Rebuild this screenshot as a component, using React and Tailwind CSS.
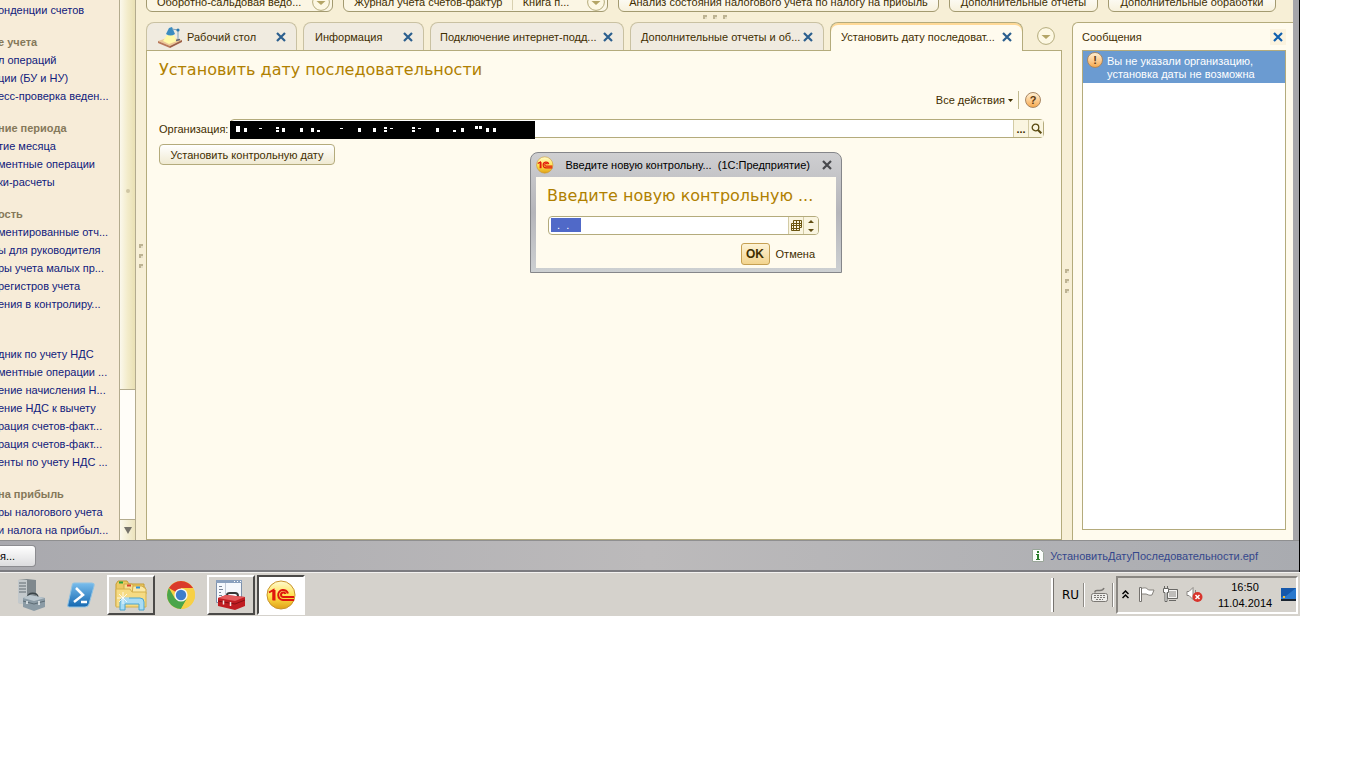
import React from "react";

const menuGroups = [
  { links: ["онденции счетов"] },
  {
    title: "е учета",
    links: ["л операций", "ции (БУ и НУ)", "есс-проверка веден..."]
  },
  {
    title: "ние периода",
    links: ["тие месяца", "ментные операции", "ки-расчеты"]
  },
  {
    title: "ость",
    links: [
      "ментированные отч...",
      "ы для руководителя",
      "ры учета малых пр...",
      "регистров учета",
      "ения в контролиру..."
    ]
  },
  {
    title: "\u00a0",
    links: [
      "дник по учету НДС",
      "ментные операции ...",
      "ение начисления Н...",
      "ение НДС к вычету",
      "рация счетов-факт...",
      "рация счетов-факт...",
      "енты по учету НДС ..."
    ]
  },
  {
    title: "на прибыль",
    links: ["ры налогового учета", "и налога на прибыл..."]
  }
];

const Cross = ({ color = "#2b5f8e" }) => (
  <svg width="10" height="10" viewBox="0 0 10 10" aria-hidden="true">
    <path d="M1 1l8 8M9 1L1 9" stroke={color} strokeWidth="2.2" fill="none" />
  </svg>
);

const CircleArrow = () => (
  <svg width="18" height="18" viewBox="0 0 18 18" aria-hidden="true">
    <circle cx="9" cy="9" r="8.4" fill="#fdf8e3" stroke="#b4ab7c" />
    <path d="M4.5 8h9L9 12z" fill="#b4a566" />
  </svg>
);

const Dots = ({ vertical }) => (
  <div className={vertical ? "flex flex-col gap-1.5" : "flex gap-1.5"}>
    {[0, 1, 2].map(i => (
      <span
        key={i}
        className="block h-1 w-1 border-l-2 border-t-2 border-[#bdb392] bg-[#e6dfc6]"
      />
    ))}
  </div>
);

const LampIcon = () => (
  <svg width="26" height="22" viewBox="0 0 26 22" aria-hidden="true">
    <path d="M1 15l12-4 12 3-12 6z" fill="#edc795" />
    <path d="M1 15l12 5v2L1 17z" fill="#b9785a" />
    <path d="M13 20l12-6v2l-12 6z" fill="#9c6047" />
    <path d="M10 9h7l3 6-8 3-6-3z" fill="#fff9a8" />
    <path d="M12 2l3-1 3 7c-3 2-6 2-9 0z" fill="#3b8cc0" />
    <path d="M15 3l6 1v10" stroke="#7fa3bd" fill="none" />
    <circle cx="21" cy="4" r="1.6" fill="#2c79ae" />
    <path d="M19 14.500l4-1" stroke="#667" strokeWidth="1.500" />
  </svg>
);

const BadgeIcon = ({ sign }) => (
  <span className="flex h-4 w-4 shrink-0 items-center justify-center rounded-full border border-[#a98763] bg-linear-to-b from-[#fff0d2] to-[#f7aa4c] text-[11px] leading-3 font-bold text-[#5b3a12]">
    {sign}
  </span>
);

const OneCLogo = ({ size }) => (
  <svg width={size} height={size} viewBox="0 0 30 30" aria-hidden="true">
    <defs>
      <linearGradient id="gold" x1="0" y1="0" x2="0" y2="1">
        <stop offset="0" stopColor="#fffbd0" />
        <stop offset=".55" stopColor="#ffe14a" />
        <stop offset="1" stopColor="#e0a016" />
      </linearGradient>
    </defs>
    <circle cx="15" cy="15" r="14" fill="url(#gold)" stroke="#c8942e" />
    <path
      d="M3 12.500L7.500 10v10M22 13.500a5 5 0 1 0-5 6.500h11M19.500 14a2.300 2.300 0 1 0-2.500 3h11"
      fill="none"
      stroke="#e0170c"
      strokeWidth="2"
    />
    <path d="M6.500 10h3v10.500h-3z" fill="#e0170c" />
  </svg>
);

const ToolButton = ({ text, className }) => (
  <button
    className={`flex h-5 shrink-0 items-center justify-center rounded-md border border-[#a39a70] bg-linear-to-b from-white to-[#f7f1dc] whitespace-nowrap ${className}`}
  >
    {text}
  </button>
);

const Toolbar = () => (
  <div className="flex h-3 items-end gap-2.5">
    <div className="flex h-5 w-[187px] shrink-0 items-center justify-between rounded-md border border-[#a39a70] bg-[#fbf6e4] pr-0.5 pl-2.5">
      <button className="whitespace-nowrap">Оборотно-сальдовая ведо...</button>
      <button aria-label="Еще отчеты">
        <CircleArrow />
      </button>
    </div>
    <div className="flex h-5 w-[265px] shrink-0 items-center justify-between rounded-md border border-[#a39a70] bg-[#fbf6e4] pr-0.5 pl-2.5">
      <button className="whitespace-nowrap">Журнал учета счетов-фактур</button>
      <span className="h-4 w-px bg-[#d8d0b0]" />
      <button className="mr-2 whitespace-nowrap">Книга п...</button>
      <button aria-label="Еще журналы">
        <CircleArrow />
      </button>
    </div>
    <ToolButton
      text="Анализ состояния налогового учета по налогу на прибыль"
      className="w-[321px]"
    />
    <ToolButton text="Дополнительные отчеты" className="w-[149px]" />
    <ToolButton text="Дополнительные обработки" className="w-[168px]" />
  </div>
);

const Sidebar = () => (
  <nav className="w-[119px] shrink-0 overflow-hidden bg-[#f7ecd8]">
    <div className="-ml-0.5 flex flex-col gap-3.5 py-px">
      {menuGroups.map((group, i) => (
        <div key={i} className="flex flex-col">
          {group.title && (
            <h2 className="h-[18px] leading-[18px] font-bold whitespace-nowrap text-[#85785a]">
              {group.title}
            </h2>
          )}
          {group.links.map((link, j) => (
            <a
              key={j}
              href="#"
              className="h-[18px] leading-[18px] whitespace-nowrap text-[#10207c]"
            >
              {link}
            </a>
          ))}
        </div>
      ))}
    </div>
  </nav>
);

const SidebarScroll = () => (
  <div className="flex w-[17px] shrink-0 flex-col border-x border-[#b3ab8e] bg-[#fffdf8]">
    <div className="flex h-[390px] items-center justify-center border-b border-[#b3ab8e] bg-linear-to-r from-[#fbf8ec] via-[#f3eccb] to-[#e9e0b4] pb-2">
      <span className="block h-1 w-1 rounded-full bg-[#cfc6a4]" />
    </div>
    <button
      aria-label="Прокрутить вниз"
      className="mt-auto flex h-[21px] items-center justify-center border-t border-[#b3ab8e] bg-linear-to-r from-[#fbf8ec] to-[#ece4bd]"
    >
      <svg width="8" height="7" viewBox="0 0 8 7" aria-hidden="true">
        <path d="M0 0h8L4 7z" fill="#75726a" />
      </svg>
    </button>
  </div>
);

const Tab = ({ text, className, icon, active }) => (
  <div
    className={`flex shrink-0 items-center justify-between rounded-t-lg border border-b-0 pr-2.5 ${
      active
        ? "h-[29px] border-[#b4ab7c] bg-[#fffbee] shadow-[inset_0_2px_0_#ffd996]"
        : "h-7 border-[#c9c1a2] bg-[#f0ebe0]"
    } ${className}`}
  >
    <button className="flex items-center gap-1 whitespace-nowrap">
      {icon}
      {text}
    </button>
    <button aria-label={`Закрыть: ${text}`}>
      <Cross />
    </button>
  </div>
);

const Tabs = () => (
  <div className="relative z-10 -mb-px flex h-[29px] items-start gap-1.5">
    <Tab text="Рабочий стол" icon={<LampIcon />} className="w-[151px] pl-2.5" />
    <Tab text="Информация" className="w-[121px] pl-[11px]" />
    <Tab text="Подключение интернет-подд..." className="w-[194px] pl-[9px]" />
    <Tab text="Дополнительные отчеты и об..." className="w-[194px] pl-2.5" />
    <Tab
      text="Установить дату последоват..."
      className="w-[193px] pl-2.5"
      active
    />
    <button aria-label="Список окон" className="mt-[5px] ml-2">
      <CircleArrow />
    </button>
  </div>
);

// bits of the organization name that stay visible on the black strip
const specks = [
  [6, 5, 4, 6], [14, 7, 3, 4], [29, 7, 3, 1], [46, 6, 3, 2], [46, 9, 3, 2],
  [52, 7, 3, 4], [70, 7, 3, 4], [81, 7, 3, 4], [87, 9, 3, 2], [110, 7, 3, 1],
  [128, 7, 3, 4], [143, 7, 3, 4], [154, 6, 3, 2], [154, 9, 3, 2],
  [160, 7, 3, 1], [182, 6, 3, 2], [182, 9, 3, 2], [188, 7, 3, 1],
  [206, 7, 3, 4], [223, 9, 3, 2], [231, 7, 3, 4], [245, 5, 3, 3],
  [249, 5, 3, 3], [256, 7, 3, 4], [263, 7, 3, 4]
];

const Specks = () => (
  <svg
    className="absolute top-px -left-px bg-black"
    width="305"
    height="18"
    viewBox="0 0 305 18"
    shapeRendering="crispEdges"
    aria-hidden="true"
  >
    {specks.map(([x, y, w, h], i) => (
      <rect key={i} x={x} y={y} width={w} height={h} fill="#fff" />
    ))}
  </svg>
);

const Form = () => (
  <main className="flex flex-1 flex-col border border-[#b4ab7c] bg-[#fffbee] pr-[17px] pl-3">
    <h1 className="mt-[7px] font-['DejaVu_Sans'] text-[16px] leading-6 text-[#b08000]">
      Установить дату последовательности
    </h1>
    <div className="mt-2 flex h-5 items-center justify-end">
      <button className="flex items-center gap-[3px]">
        Все действия
        <svg width="5" height="3" viewBox="0 0 5 3" aria-hidden="true">
          <path d="M0 0h5L2.500 3z" fill="#3f2e00" />
        </svg>
      </button>
      <span className="mr-1.5 ml-[5px] h-[18px] w-px bg-[#c2ba90]" />
      <button aria-label="Справка" className="mr-[3px]">
        <BadgeIcon sign="?" />
      </button>
    </div>
    <div className="mt-[9px] flex items-center">
      <label htmlFor="org" className="w-[71px] whitespace-nowrap">
        Организация:
      </label>
      <div className="relative flex h-[19px] flex-1 rounded-sm border border-[#b4ab7c] bg-white">
        <input id="org" className="min-w-0 flex-1 px-1 outline-none" />
        <Specks />
        <button className="w-[15px] border-l border-[#d3cba5] bg-[#faf5e0] font-bold">
          ...
        </button>
        <button
          aria-label="Открыть"
          className="flex w-[15px] items-center justify-center border-l border-[#d3cba5] bg-[#faf5e0]"
        >
          <svg width="11" height="11" viewBox="0 0 11 11" aria-hidden="true">
            <circle cx="4.500" cy="4.500" r="3.300" fill="none" stroke="#5a4a10" strokeWidth="1.300" />
            <path d="M7 7l3.300 3.300" stroke="#5a4a10" strokeWidth="2" />
          </svg>
        </button>
      </div>
    </div>
    <button className="mt-1.5 h-[21px] w-44 rounded-sm border border-[#b4ab7c] bg-linear-to-b from-white to-[#f0ead2] whitespace-nowrap">
      Установить контрольную дату
    </button>
  </main>
);

const Messages = () => (
  <aside className="flex w-[221px] shrink-0 flex-col rounded-tl-md border-t border-l border-[#b4ab7c] bg-[#fffbee] pr-[7px] pb-2.5 pl-[9px]">
    <div className="flex h-[27px] items-center justify-between">
      <h2>Сообщения</h2>
      <button
        aria-label="Закрыть сообщения"
        className="flex h-4 w-4 items-center justify-center bg-[#fbf3df]"
      >
        <Cross color="#0f5fae" />
      </button>
    </div>
    <div className="flex-1 border border-[#b4ab7c] bg-white">
      <div className="flex gap-1 bg-[#6b9bd1] px-1 pt-1 pb-0.5 leading-[13px] whitespace-nowrap text-white">
        <div className="-mt-[3px]">
          <BadgeIcon sign="!" />
        </div>
        <p>
          Вы не указали организацию,
          <br />
          установка даты не возможна
        </p>
      </div>
    </div>
  </aside>
);

const DateDialog = () => (
  <div
    role="dialog"
    aria-labelledby="dialog-title"
    className="absolute top-[152px] left-[530px] z-20 w-[312px] rounded-t-lg border border-[#85868a] bg-linear-to-b from-[#cfcfd1] via-[#b5b5ba] to-[#cdd0d2] px-[5px] pb-1"
  >
    <div className="flex h-6 items-center gap-3 text-black">
      <OneCLogo size={18} />
      <span className="flex-1 whitespace-pre">
        {"Введите новую контрольну...  (1С:Предприятие)"}
      </span>
      <button aria-label="Закрыть окно" className="mr-1">
        <Cross color="#47484c" />
      </button>
    </div>
    <div className="bg-[#fffbee] pt-[7px] pr-[17px] pb-[3px] pl-3">
      <h2
        id="dialog-title"
        className="-ml-px font-['DejaVu_Sans'] text-[16px] leading-6 whitespace-nowrap text-[#b08000]"
      >
        Введите новую контрольную ...
      </h2>
      <div className="mt-2 flex h-[19px] overflow-hidden rounded-sm border border-[#b4ab7c] bg-white p-px pr-0">
        <input
          aria-label="Контрольная дата"
          defaultValue="  .  ."
          className="ml-px h-[14px] w-[30px] bg-[#5069c8] text-white outline-none"
        />
        <button
          aria-label="Выбрать дату"
          className="-my-px ml-auto flex w-[15px] items-center justify-center border-l border-[#d3cba5] bg-[#faf5e0]"
        >
          <svg width="11" height="11" viewBox="0 0 11 11" aria-hidden="true">
            <path
              d="M2.5 .5h8v7h-2v3h-8v-7h2zM2.5 3.5v7M5.5 .5v10M8.5 .5v10M.5 5.5h10M.5 8.5h8M2.5 3.5h8"
              fill="none"
              stroke="#6b5510"
            />
          </svg>
        </button>
        <button
          aria-label="Изменить дату"
          className="-my-px flex w-[15px] items-center justify-center border-l border-[#d3cba5] bg-[#faf5e0]"
        >
          <svg width="6" height="12" viewBox="0 0 6 12" aria-hidden="true">
            <path d="M0 3h6L3 0zM0 9h6L3 12z" fill="#5f4c12" />
          </svg>
        </button>
      </div>
      <div className="mt-2 flex h-[22px] items-center justify-end gap-1.5">
        <button className="h-[22px] w-[29px] rounded-[3px] border border-[#c6a052] bg-linear-to-b from-[#fdf3d6] to-[#f3d48e] text-[12px] font-bold">
          OK
        </button>
        <button className="pr-1">Отмена</button>
      </div>
    </div>
  </div>
);

const StatusBar = () => (
  <div className="flex h-8 items-center justify-between border-t border-b-2 border-t-[#8f8f90] border-b-[#7c7c80] bg-linear-to-r from-[#a9a9ae] via-[#bcbabb] to-[#a9abb0] pr-[41px]">
    <button className="h-[22px] w-9 rounded-r border border-l-0 border-[#8c8c90] bg-linear-to-b from-white to-[#dcdcde] text-left text-black">
      я...
    </button>
    <a href="#" className="flex items-center gap-1.5 text-[#34478c]">
      <svg width="12" height="13" viewBox="0 0 12 13" aria-hidden="true">
        <path d="M.5 .5h8l3 3v9h-11z" fill="#fbfdfb" stroke="#9aa69a" />
        <path d="M5 2h2v2H5zM4 5h3v5h1v1H4v-1h1V6H4z" fill="#2b7d2b" />
      </svg>
      УстановитьДатуПоследовательности.epf
    </a>
  </div>
);

const ServerIcon = () => (
  <svg width="30" height="32" viewBox="0 0 30 32" aria-hidden="true">
    <path d="M2 1l9-1 9 1v22l-4 2-14-1z" fill="#7f888d" />
    <path d="M2 1h9v25l-9-2z" fill="#c3c9cc" />
    <path d="M3 4h7M3 7h7M3 10h7M3 13h7" stroke="#606b71" />
    <path d="M12 18c0-5 9-5 10 0" stroke="#3b4549" strokeWidth="1.500" fill="none" />
    <path d="M7 19l7-3 15 3v9l-11 4-11-4z" fill="#8b9ba5" />
    <path d="M7 19l7-3 15 3-11 3z" fill="#bac6cd" />
    <path d="M7 22l11 3 11-3" stroke="#5d6c75" fill="none" />
    <path d="M11 22v3M23 22v4" stroke="#edf2f4" strokeWidth="1.500" />
  </svg>
);

const PowerShellIcon = () => (
  <svg width="28" height="26" viewBox="0 0 28 26" aria-hidden="true">
    <defs>
      <linearGradient id="ps" x1="0" y1="0" x2="0" y2="1">
        <stop offset="0" stopColor="#79bdec" />
        <stop offset="1" stopColor="#1568b0" />
      </linearGradient>
    </defs>
    <path d="M7 1h18q3 0 2 3l-5 18q-1 3-4 3H2q-2 0-1-3L5 4q0-3 2-3z" fill="url(#ps)" stroke="#8fc3e4" />
    <path d="M9 6l7 7-9 7M14 20h6" stroke="#fff" strokeWidth="2.500" fill="none" />
  </svg>
);

const FoldersIcon = () => (
  <svg width="34" height="34" viewBox="0 0 34 34" aria-hidden="true">
    <path d="M2 6l2-3h9l2 3h15v22H2z" fill="#ecc964" stroke="#c59d35" />
    <path d="M5 4.500h4" stroke="#24a33a" strokeWidth="2" />
    <path d="M10 6h8l2 3h11v18H10z" fill="#f7df91" stroke="#cfa946" />
    <path d="M13 7.500h4" stroke="#d7412c" strokeWidth="2" />
    <path d="M19 8h9l4 3v5H18z" fill="#fbe9a8" stroke="#cfa946" />
    <path d="M22 9.500h4" stroke="#2c91db" strokeWidth="2" />
    <path d="M2 11h14l2 3h14v15H2z" fill="#f6db83" stroke="#d5b14c" />
    <path d="M6 32v-8q0-4 4-4h16q4 0 4 4v8h-5v-6H11v6z" fill="#a9dcf4" stroke="#4ba4ce" />
    <path d="M9 14v12M3 20h12M5 16l8 8M13 16l-8 8" stroke="#fff" strokeWidth=".8" />
  </svg>
);

const ChromeIcon = () => (
  <svg width="30" height="30" viewBox="0 0 30 30" aria-hidden="true">
    <circle cx="15" cy="15" r="14" fill="#f7d046" />
    <path d="M15 15L2.900 8A14 14 0 0 1 27.100 8H15z" fill="#da3a2b" />
    <path d="M2.900 8A14 14 0 0 0 15 29l6-10.500L9 18.500z" fill="#4aa54a" />
    <path d="M27.100 8H15l6 10.500L15 29A14 14 0 0 0 27.100 8z" fill="#f7d046" />
    <circle cx="15" cy="15" r="6.600" fill="#f4f6f6" />
    <circle cx="15" cy="15" r="5.200" fill="#3d7dcb" />
  </svg>
);

const ToolboxIcon = () => (
  <svg width="32" height="34" viewBox="0 0 32 34" aria-hidden="true">
    <path d="M1.500 2.500h25v22h-25z" fill="#f5f8fc" stroke="#7d90aa" />
    <path d="M1 2h26v3H1z" fill="#8aa0bd" />
    <path d="M19 3.500h1M22 3.500h1M25 3.500h1" stroke="#fff" />
    <path d="M4 8.500h3M4 11.500h4M4 14.500h2M4 17.500h3" stroke="#7b8799" />
    <path d="M10.500 5v15" stroke="#c3cad6" />
    <path d="M12 19v-2q0-2 3-2h5q3 0 3 3v2" stroke="#353535" strokeWidth="2" fill="none" />
    <path d="M3 20l8-3 19 2v9l-10 4-17-4z" fill="#c01d22" />
    <path d="M3 20l8-3 19 2-10 4z" fill="#e4595b" />
    <path d="M3 23l17 3 10-4" stroke="#861014" fill="none" />
    <path d="M8.500 22.500v4M15.500 24v4" stroke="#f4e6e4" strokeWidth="1.500" />
  </svg>
);

const taskItems = [
  { name: "Диспетчер сервера", icon: <ServerIcon /> },
  { name: "PowerShell", icon: <PowerShellIcon /> },
  { name: "Проводник", icon: <FoldersIcon />, state: "open" },
  { name: "Chrome", icon: <ChromeIcon /> },
  { name: "Инструменты", icon: <ToolboxIcon />, state: "open" },
  { name: "1С:Предприятие", icon: <OneCLogo size={30} />, state: "active" }
];

const taskStyles = {
  open: "border-2 border-t-white border-l-white border-r-[#4b4a48] border-b-[#4b4a48]",
  active:
    "border-2 border-t-[#4b4a48] border-l-[#4b4a48] border-r-white border-b-white bg-white"
};

const TrayIcons = () => (
  <div className="flex items-center gap-[7px]">
    <button aria-label="Скрытые значки" className="mr-0.5">
      <svg width="7" height="9" viewBox="0 0 7 9" aria-hidden="true">
        <path d="M.5 4l3-3 3 3M.5 8l3-3 3 3" stroke="#000" strokeWidth="1.500" fill="none" />
      </svg>
    </button>
    <button aria-label="Центр поддержки">
      <svg width="17" height="17" viewBox="0 0 17 17" aria-hidden="true">
        <path d="M3.500 2.500c3-1 5-1 7 1.500h5.500l-2 5c-3 1-5-1-6-1H3.500z" fill="#fff" stroke="#85827d" />
        <path d="M1.500 1.500v14h2v-14z" fill="#fff" stroke="#75726e" />
      </svg>
    </button>
    <button aria-label="Сеть">
      <svg width="17" height="17" viewBox="0 0 17 17" aria-hidden="true">
        <path d="M5.500 3.500h10v9h-10z" fill="#bfbdba" stroke="#696865" />
        <path d="M6.500 4.500h8v7h-8z" fill="none" stroke="#f5f4f2" />
        <path d="M7 14.500h7" stroke="#696865" />
        <path d="M1.500 2.500h5v4h-1.500v9h-2v-9h-1.500zM2.500 2V0M5.500 2V0" fill="#fff" stroke="#696865" />
      </svg>
    </button>
    <button aria-label="Звук выключен">
      <svg width="17" height="17" viewBox="0 0 17 17" aria-hidden="true">
        <path d="M1 5.500h2l4-4v12l-4-4H1z" fill="#fff" stroke="#8a8783" />
        <path d="M9.500 4v5" stroke="#8a8783" />
        <circle cx="11.500" cy="11" r="5" fill="#d8342c" />
        <path d="M9.500 9l4 4M13.500 9l-4 4" stroke="#fff" strokeWidth="1.500" />
      </svg>
    </button>
  </div>
);

const Taskbar = () => (
  <footer className="flex h-11 items-center border-t border-[#f3f2f0] bg-[#d5d2cc] pl-[7px] text-black">
    <div className="flex gap-0.5">
      {taskItems.map(item => (
        <button
          key={item.name}
          aria-label={item.name}
          className={`flex h-10 w-12 items-center justify-center ${
            item.state ? taskStyles[item.state] : ""
          }`}
        >
          {item.icon}
        </button>
      ))}
    </div>
    <div className="ml-auto flex items-center">
      <span className="mr-2 h-[34px] w-[3px] border-r border-l-2 border-l-white border-r-[#76736f]" />
      <button className="mr-1 font-['DejaVu_Sans'] text-[12px]">RU</button>
      <span className="mr-1.5 h-6 w-0.5 border-l border-l-[#8d8a85] bg-white" />
      <button aria-label="Клавиатура" className="mr-1">
        <svg width="17" height="16" viewBox="0 0 17 16" aria-hidden="true">
          <path d="M4 5.500v-1q0-1 2-1h3q3 0 4-2.500" stroke="#7b7874" strokeWidth="1.500" fill="none" />
          <rect x=".5" y="6.500" width="16" height="8" rx="2" fill="#eeedea" stroke="#7b7874" />
          <path d="M3 8.500h11M3 10.500h11M5 12.500h7" stroke="#7b7874" strokeDasharray="2 1" />
        </svg>
      </button>
      <span className="mr-0.5 h-6 w-0.5 border-l border-l-[#8d8a85] bg-white" />
    </div>
    <div className="flex h-[38px] w-[182px] shrink-0 items-center justify-between border-2 border-t-[#8a8782] border-r-white border-b-white border-l-[#8a8782] pl-1">
      <TrayIcons />
      <div className="ml-1.5 text-center leading-4">
        16:50
        <br />
        11.04.2014
      </div>
      <button aria-label="Свернуть все окна">
        <svg width="15" height="13" viewBox="0 0 15 13" aria-hidden="true">
          <path d="M0 0h15v11H0z" fill="#2a78cc" />
          <path d="M0 0h15L5 8 0 9z" fill="#1558ab" />
          <path d="M0 11h15v2H0z" fill="#1a2430" />
          <path d="M2 8h2v2H2z" fill="#f3ba38" />
        </svg>
      </button>
    </div>
    <span className="w-0.5" />
  </footer>
);

const App = () => (
  <div className="min-h-screen bg-white pr-[66px] font-['Liberation_Sans',sans-serif] text-[11px] leading-4 text-[#3f2e00]">
    <div className="relative border-r border-black">
      <div className="flex border-r-[6px] border-[#a5a5aa] bg-[#f7efd6]">
        <Sidebar />
        <SidebarScroll />
        <div className="flex w-2.5 shrink-0 items-center justify-center">
          <div className="-mt-7">
            <Dots vertical />
          </div>
        </div>
        <div className="flex min-w-0 flex-1 flex-col">
          <Toolbar />
          <div className="flex h-2.5 items-center justify-center pr-2.5">
            <Dots />
          </div>
          <div className="flex flex-1">
            <div className="flex min-w-0 flex-1 flex-col">
              <Tabs />
              <Form />
            </div>
            <div className="flex w-2.5 shrink-0 items-center justify-center">
              <Dots vertical />
            </div>
            <Messages />
          </div>
        </div>
      </div>
      <StatusBar />
      <DateDialog />
    </div>
    <Taskbar />
  </div>
);

export default App;
